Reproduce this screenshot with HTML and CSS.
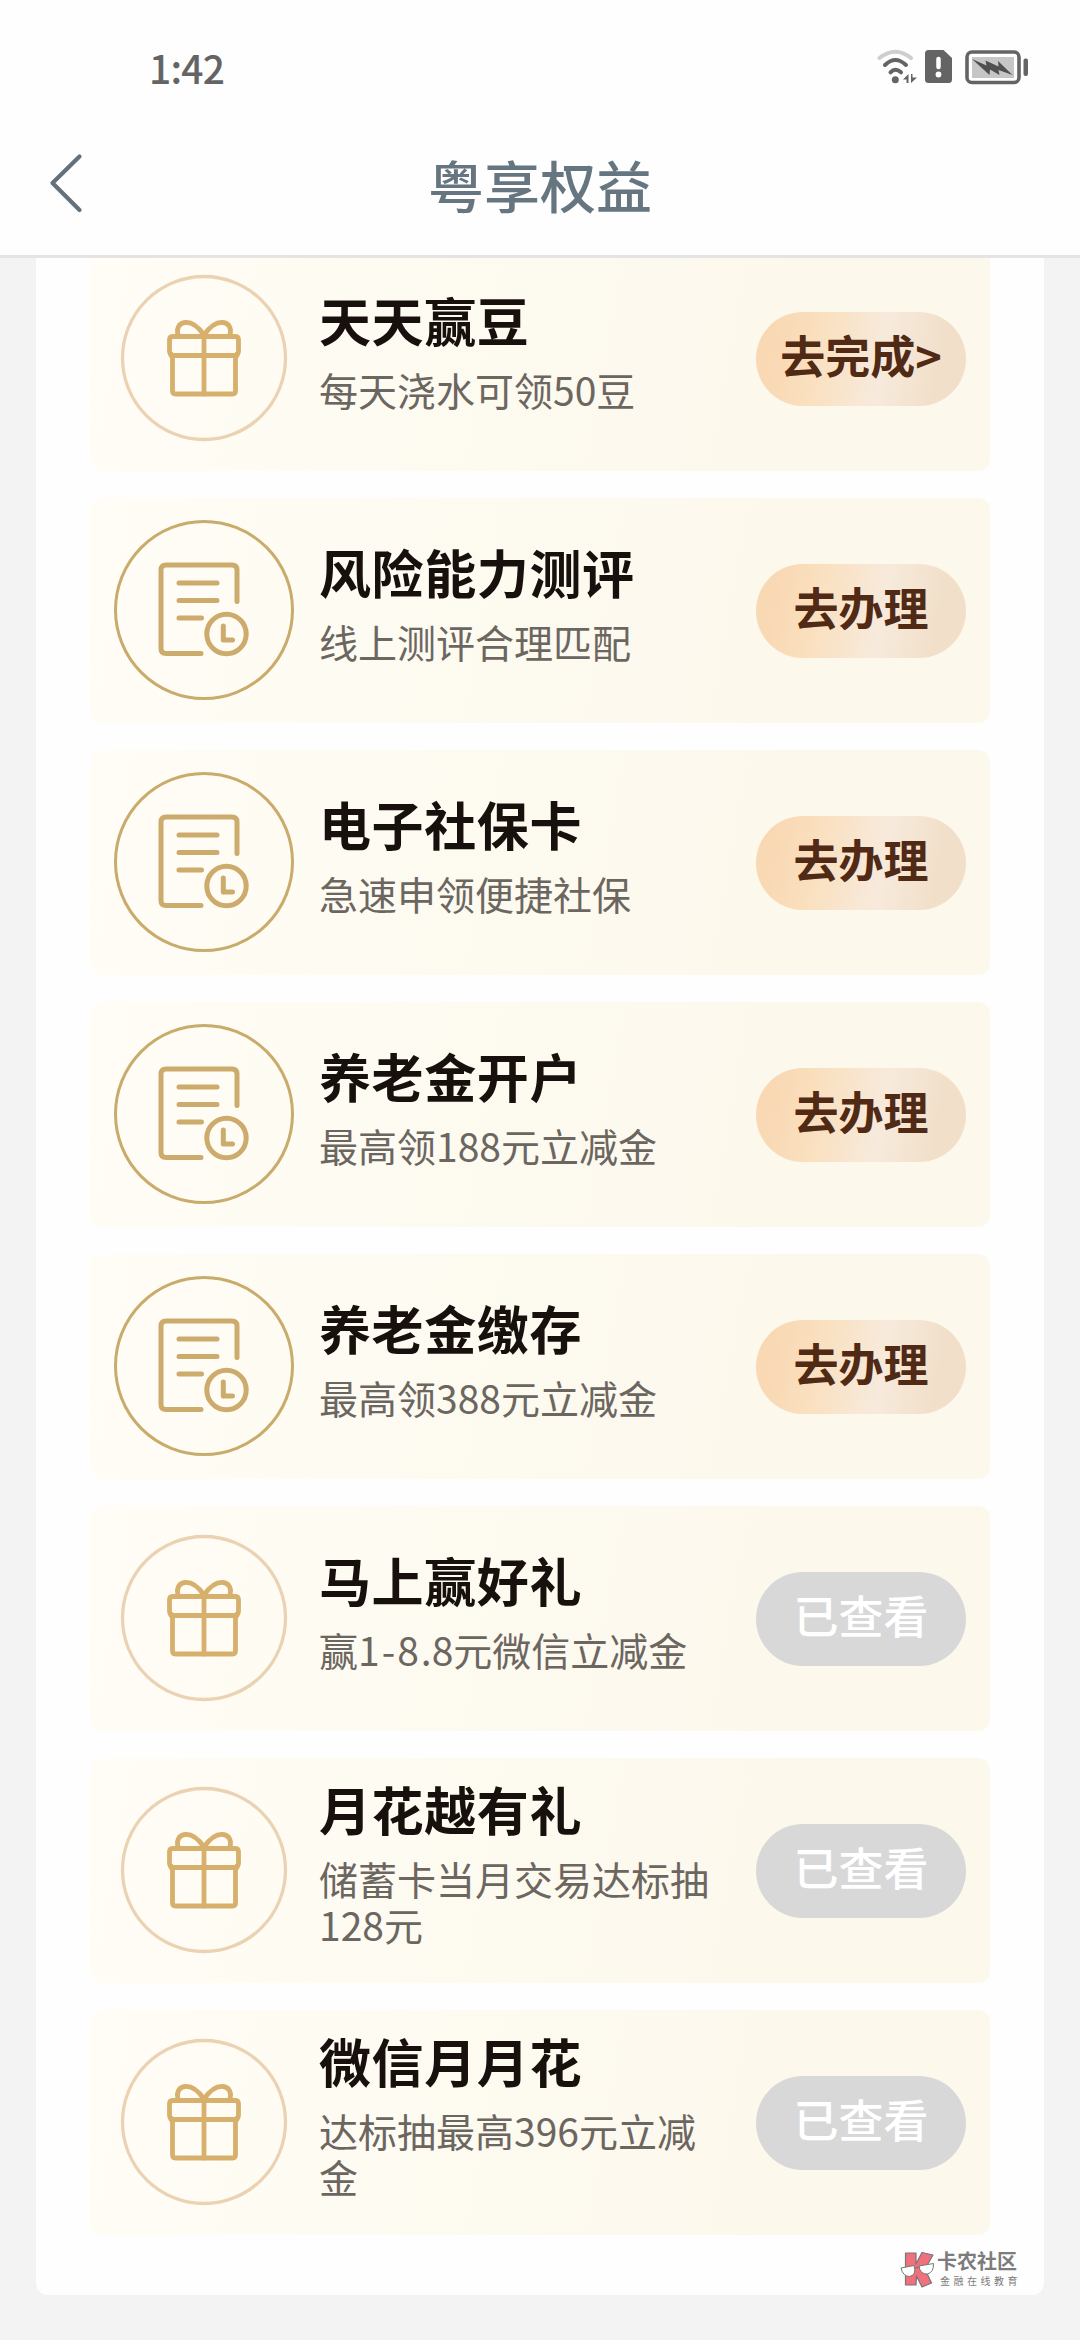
FILE: index.html
```html
<!DOCTYPE html>
<html lang="zh-CN">
<head>
<meta charset="utf-8">
<title>粤享权益</title>
<link rel="stylesheet" href="styles.css">
</head>
<body>
<svg class="defs" aria-hidden="true">
  <symbol id="gift" viewBox="0 0 180 180">
    <circle cx="90" cy="90" r="81.5" fill="none" stroke="#ebd2b3" stroke-width="3.300"/>
    <g fill="none" stroke="#d6b06c" stroke-width="4.800" stroke-linejoin="round" stroke-linecap="round">
      <path d="M57 86H56.500Q55.500 85 55.500 83V72Q55.500 68.500 59 68.500H121Q124.500 68.500 124.500 72V83Q124.500 85 123.500 86H123"/>
      <path d="M57 87.500H123"/>
      <path d="M58.500 87.500V123Q58.500 126 61.500 126H118.500Q121.500 126 121.500 123V87.500"/>
      <path d="M90 68.500V126"/>
      <path d="M90 67C85 60 78 54 71.500 54.500C64 55 62 62 64.500 68"/>
      <path d="M90 67C95 60 102 54 108.500 54.500C116 55 118 62 115.500 68"/>
    </g>
  </symbol>
  <symbol id="form" viewBox="0 0 180 180">
    <circle cx="90" cy="90" r="88.500" fill="none" stroke="#c9ab6c" stroke-width="3"/>
    <g fill="none" stroke="#cdab6c" stroke-width="5" stroke-linejoin="round" stroke-linecap="round">
      <path d="M87 133.500H52Q47 133.500 47 128.500V50Q47 45 52 45H118Q123 45 123 50V81.500"/>
      <path d="M65 63H103M65 80.500H103M65 98H87.500"/>
      <circle cx="112.500" cy="114" r="19.700"/>
      <path d="M109.300 106V120H118.500"/>
    </g>
  </symbol>
</svg>

<header class="top">
  <div class="status">
    <span class="clock">1:42</span>
    <svg class="signals" width="154" height="36" viewBox="0 0 154 36">
      <g fill="none" stroke-linecap="round" stroke-width="4">
        <path d="M4.500 9Q20.300 -3.500 36 9" stroke="#cecece"/>
        <path d="M10 16Q20.300 6 31 16" stroke="#646464"/>
        <path d="M15.500 23.300Q20.300 18 26 23.300" stroke="#646464"/>
      </g>
      <circle cx="20.300" cy="30.700" r="3.500" fill="#646464"/>
      <path d="M33.500 25V34H31.500V30.500H28ZM36 34V25H37.500V28.500H42Z" fill="#646464"/>
      <path d="M53.500 1H68.500L77 9V30.500Q77 34 73.500 34H53.500Q50 34 50 30.500V4.500Q50 1 53.500 1Z" fill="#646464"/>
      <path d="M63.500 10V18" stroke="#fff" stroke-width="4.500" stroke-linecap="round"/>
      <circle cx="63.500" cy="25.500" r="2.900" fill="#fff"/>
      <rect x="92" y="3" width="52" height="30.500" rx="5" fill="#fff" stroke="#646464" stroke-width="3.600"/>
      <rect x="97" y="8" width="42" height="21" fill="#c6c6c6"/>
      <path d="M97 10L111.500 16.500L110.500 11.500L123.500 17.500L123 12L137.500 26L123.500 21L124.500 26L115 20.500L114.500 26Z" fill="#505050"/>
      <rect x="148.500" y="9.500" width="4.500" height="17.500" rx="2" fill="#646464"/>
    </svg>
  </div>
  <div class="nav">
    <svg class="back" width="36" height="60" viewBox="0 0 36 60"><path d="M31.500 3.500L4.500 30L31.500 57" fill="none" stroke="#64717a" stroke-width="4.200" stroke-linecap="round" stroke-linejoin="round"/></svg>
    <h1 class="heading">粤享权益</h1>
  </div>
</header>

<main class="page">
  <section class="panel">
    <article class="card">
      <svg class="icon"><use href="#gift"/></svg>
      <div class="info"><h2 class="name">天天赢豆</h2><p class="desc">每天浇水可领50豆</p></div>
      <button class="action">去完成&gt;</button>
    </article>
    <article class="card">
      <svg class="icon"><use href="#form"/></svg>
      <div class="info"><h2 class="name">风险能力测评</h2><p class="desc">线上测评合理匹配</p></div>
      <button class="action">去办理</button>
    </article>
    <article class="card">
      <svg class="icon"><use href="#form"/></svg>
      <div class="info"><h2 class="name">电子社保卡</h2><p class="desc">急速申领便捷社保</p></div>
      <button class="action">去办理</button>
    </article>
    <article class="card">
      <svg class="icon"><use href="#form"/></svg>
      <div class="info"><h2 class="name">养老金开户</h2><p class="desc">最高领188元立减金</p></div>
      <button class="action">去办理</button>
    </article>
    <article class="card">
      <svg class="icon"><use href="#form"/></svg>
      <div class="info"><h2 class="name">养老金缴存</h2><p class="desc">最高领388元立减金</p></div>
      <button class="action">去办理</button>
    </article>
    <article class="card">
      <svg class="icon"><use href="#gift"/></svg>
      <div class="info"><h2 class="name">马上赢好礼</h2><p class="desc">赢<span class="range">1-8</span>.8元微信立减金</p></div>
      <button class="action viewed">已查看</button>
    </article>
    <article class="card">
      <svg class="icon"><use href="#gift"/></svg>
      <div class="info"><h2 class="name">月花越有礼</h2><p class="desc">储蓄卡当月交易达标抽128元</p></div>
      <button class="action viewed">已查看</button>
    </article>
    <article class="card">
      <svg class="icon"><use href="#gift"/></svg>
      <div class="info"><h2 class="name">微信月月花</h2><p class="desc">达标抽最高396元立减金</p></div>
      <button class="action viewed">已查看</button>
    </article>
  </section>
</main>

<aside class="watermark">
  <svg width="36" height="38" viewBox="0 0 36 38">
    <g fill="#f0707c" stroke="#777" stroke-width="1.200" stroke-linejoin="round">
      <path d="M5.500 2H16V13L22 1.500L33 4L25 18L31.500 32L22 36L16.500 25L16 34H5.500Z"/>
    </g>
    <g fill="#fff" stroke="#777" stroke-width="1">
      <path d="M1 17L14 14.500Q17 24 9.500 25.500Q3 25.500 1 17Z"/>
      <path d="M19 15L33.500 12.500Q34 21 27.500 23Q20 23.500 19 15Z"/>
      <path d="M15 17L19 16"/>
    </g>
  </svg>
  <div class="brand"><strong class="brand-name">卡农社区</strong><span class="brand-tag">金融在线教育</span></div>
</aside>
</body>
</html>
```
FILE: styles.css
```css
* { box-sizing: border-box; }

body {
  margin: 0;
  width: 1080px;
  height: 2340px;
  display: flex;
  flex-direction: column;
  overflow: hidden;
  background: #f3f3f3;
  font-family: "Noto Sans CJK SC", "Noto Sans", sans-serif;
}

.defs { display: none; }

.top {
  flex: none;
  height: 258px;
  background: #fefefe;
  border-bottom: 3px solid #e4e4e2;
}

.status {
  height: 130px;
  padding: 3px 51px 0 149px;
  display: flex;
  align-items: center;
  justify-content: space-between;
}

.clock {
  font-size: 39px;
  line-height: 50px;
  font-weight: 500;
  letter-spacing: -0.8px;
  color: #646464;
}

.nav {
  height: 106px;
  padding: 0 48px;
  display: grid;
  grid-template-columns: 36px 1fr 36px;
  align-items: center;
}

.heading {
  margin: 0;
  padding-top: 2px;
  text-align: center;
  font-size: 56px;
  line-height: 70px;
  font-weight: 500;
  color: #667680;
}

.page {
  flex: 1;
  padding: 0 36px;
  overflow: hidden;
}

.panel {
  margin-top: -12px;
  padding: 0 54px 60px;
  display: flex;
  flex-direction: column;
  gap: 27px;
  background: #fefefe;
  border-radius: 12px;
}

.card {
  height: 225px;
  padding: 0 24px;
  display: flex;
  align-items: center;
  background: linear-gradient(100deg, #fffdf6, #fcf8ec 75%);
  border-radius: 12px;
}

.icon {
  flex: none;
  width: 180px;
  height: 180px;
  margin-bottom: 1px;
}

.info {
  width: 400px;
  margin-left: 25px;
  padding-bottom: 17px;
}

.name {
  margin: 1px 0 15px;
  font-size: 52px;
  line-height: 62px;
  font-weight: 700;
  letter-spacing: 0.6px;
  color: #17100d;
}

.desc {
  margin: 0;
  font-size: 39px;
  line-height: 46px;
  color: #6c6661;
}

.range { letter-spacing: 2px; }

.action {
  width: 210px;
  height: 94px;
  margin: 0 0 0 auto;
  padding: 0 0 7px;
  border: 0;
  border-radius: 47px;
  background: linear-gradient(100deg, #f9d8b4 10%, #fae0bf 30%, #f7eadc 60%, #f1dfc9 85%);
  font: 700 45px/60px "Noto Sans CJK SC", sans-serif;
  color: #502a14;
}

.action.viewed {
  background: #d8d8d8;
  color: #fff;
  font-weight: 500;
}

.watermark {
  position: absolute;
  left: 900px;
  top: 2251px;
  display: flex;
  gap: 1px;
}

.brand {
  display: flex;
  flex-direction: column;
  margin-top: -3px;
  color: #7c7c7c;
}

.brand-name {
  font-size: 20px;
  line-height: 26px;
  font-weight: 700;
}

.brand-tag {
  padding-left: 3px;
  font-size: 10px;
  line-height: 14px;
  letter-spacing: 3.500px;
}
```
